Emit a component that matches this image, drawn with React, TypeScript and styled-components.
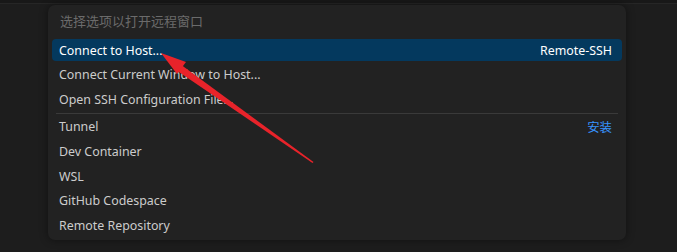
import React from "react";
import styled, { createGlobalStyle } from "styled-components";

const GlobalStyle = createGlobalStyle`
  html, body {
    margin: 0;
    padding: 0;
    background: #1d1d1d;
  }
`;

const Screen = styled.div`
  position: relative;
  width: 677px;
  height: 252px;
  overflow: hidden;
  background: #1d1d1d;
  font-family: "Segoe UI", "Noto Sans", "Noto Sans CJK SC", sans-serif;
`;

const TopStrip = styled.div`
  height: 3px;
  background: #181818;
  border-bottom: 1px solid #262626;
`;

const Panel = styled.div`
  margin: 1px 0 0 48px;
  width: 578px;
  height: 235px;
  box-sizing: border-box;
  background: #222222;
  border-radius: 7px;
  box-shadow: 0 0 8px rgba(0, 0, 0, 0.45);
  display: flex;
  flex-direction: column;
`;

const Title = styled.div`
  height: 31px;
  padding-left: 12px;
  display: flex;
  align-items: center;
  font-size: 13px;
  color: #6b6b6b;
  margin-bottom: 3px;
`;

const List = styled.div`
  display: flex;
  flex-direction: column;
  gap: 2.8px;
  padding: 0 4px;
`;

const Row = styled.div<{ $active?: boolean }>`
  height: 22px;
  display: flex;
  align-items: center;
  justify-content: space-between;
  padding: 0 10px 0 7px;
  border-radius: 4px;
  font-size: 12.4px;
  color: ${(p) => (p.$active ? "#ffffff" : "#cccccc")};
  background: ${(p) => (p.$active ? "#04395e" : "transparent")};
`;

const Detail = styled.span<{ $link?: boolean }>`
  font-size: 12.4px;
  color: ${(p) => (p.$link ? "#3794ff" : "inherit")};
`;

const Separator = styled.div`
  height: 1px;
  margin: -0.8px 4px;
  background: #3a3a3a;
`;

const Arrow = styled.svg`
  position: absolute;
  left: 0;
  top: 0;
  pointer-events: none;
`;

type Item = { label: string; detail?: string; link?: boolean; active?: boolean };

const topItems: Item[] = [
  { label: "Connect to Host...", detail: "Remote-SSH", active: true },
  { label: "Connect Current Window to Host..." },
  { label: "Open SSH Configuration File..." },
];

const bottomItems: Item[] = [
  { label: "Tunnel", detail: "安装", link: true },
  { label: "Dev Container" },
  { label: "WSL" },
  { label: "GitHub Codespace" },
  { label: "Remote Repository" },
];

function renderRow(item: Item) {
  return (
    <Row key={item.label} $active={item.active}>
      <span>{item.label}</span>
      {item.detail && <Detail $link={item.link}>{item.detail}</Detail>}
    </Row>
  );
}

export default function App() {
  return (
    <Screen>
      <GlobalStyle />
      <TopStrip />
      <Panel>
        <Title>选择选项以打开远程窗口</Title>
        <List>
          {topItems.map(renderRow)}
          <Separator />
          {bottomItems.map(renderRow)}
        </List>
      </Panel>
      <Arrow width="677" height="252" viewBox="0 0 677 252">
        <polygon points="313.5,162 312.5,163 176,70 180,64" fill="#e8232a" />
        <polygon points="161,53 186,62 177,74" fill="#e8232a" />
      </Arrow>
    </Screen>
  );
}
